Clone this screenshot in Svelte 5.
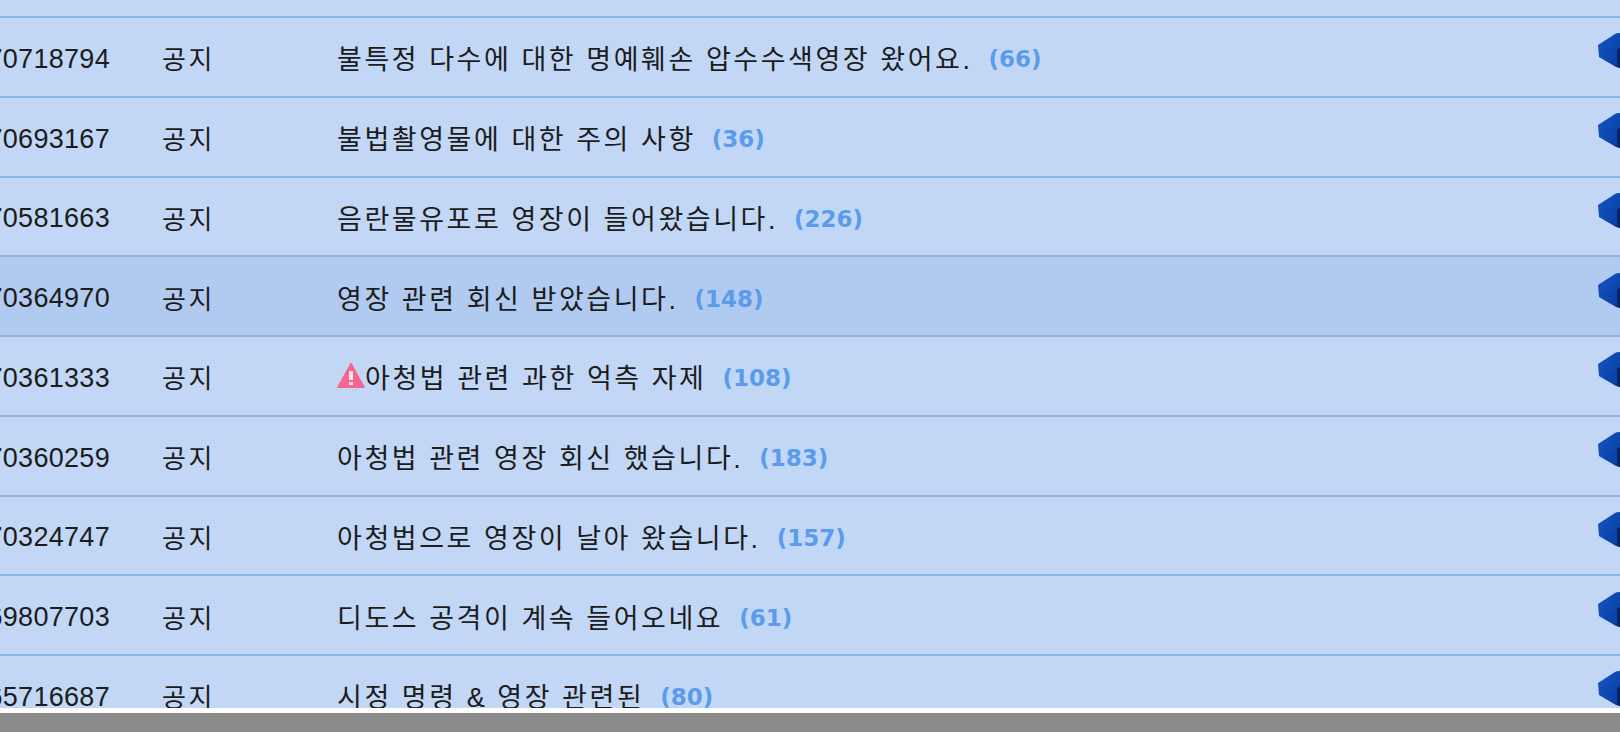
<script>
	const rows = [
		{ id: '70718794', title: '불특정 다수에 대한 명예훼손 압수수색영장 왔어요.', count: 66 },
		{ id: '70693167', title: '불법촬영물에 대한 주의 사항', count: 36 },
		{ id: '70581663', title: '음란물유포로 영장이 들어왔습니다.', count: 226 },
		{ id: '70364970', title: '영장 관련 회신 받았습니다.', count: 148, hover: true },
		{ id: '70361333', title: '아청법 관련 과한 억측 자제', count: 108, warn: true },
		{ id: '70360259', title: '아청법 관련 영장 회신 했습니다.', count: 183 },
		{ id: '70324747', title: '아청법으로 영장이 날아 왔습니다.', count: 157 },
		{ id: '69807703', title: '디도스 공격이 계속 들어오네요', count: 61 },
		{ id: '65716687', title: '시정 명령 & 영장 관련된', count: 80 }
	];
</script>

<svg class="defs" width="0" height="0">
	<defs>
		<linearGradient id="side" x1="0" y1="0" x2="1" y2="1">
			<stop offset="0" stop-color="#1257c8" />
			<stop offset="1" stop-color="#0a3a9c" />
		</linearGradient>
	</defs>
</svg>

<div class="page">
	<div class="list">
		<div class="row top"></div>
		{#each rows as row}
			<div class="row" class:hover={row.hover}>
				<div class="num">{row.id}</div>
				<div class="kind">공지</div>
				<div class="title">
					{#if row.warn}
						<svg class="warn" viewBox="0 0 28 26" width="28" height="26">
							<path d="M14 1 L27.5 25.5 H0.5 Z" fill="#f4658f" stroke="#f4658f" stroke-linejoin="round" />
							<rect x="12" y="9" width="4" height="9" fill="#fbdde6" />
							<rect x="12" y="20" width="4" height="3" fill="#fbdde6" />
						</svg>
					{/if}
					<span class="text">{row.title}</span>
					<span class="count">({row.count})</span>
				</div>
				<svg class="box" viewBox="0 0 22 35" width="22" height="35">
					<path d="M0 12 L17 1 Q18 0 22 0 V35 L18 34 L1 24 Z" fill="url(#side)" />
					<path d="M19 17 L22 15 V35 L19 34 Z" fill="#0a2566" />
				</svg>
			</div>
		{/each}
	</div>
	<div class="gap"></div>
	<div class="bar"></div>
</div>

<style>
	:global(body) {
		margin: 0;
		overflow: hidden;
	}

	.defs {
		position: absolute;
	}

	.page {
		height: 732px;
		display: grid;
		grid-template-rows: 708px 5px 19px;
		background: #fff;
	}

	.list {
		overflow: hidden;
		background: #c2d7f5;
	}

	.row {
		height: 77.75px;
		border-bottom: 2px solid #8eb4e8;
		display: grid;
		grid-template-columns: 162px 175px 1fr 22px;
		align-items: center;
		background: #c2d7f5;
		color: #1c1c1c;
		font-family: 'Liberation Sans', 'Noto Sans CJK KR', sans-serif;
		font-size: 27px;
	}

	.row.top {
		height: 16px;
	}

	.row.hover {
		background: #b1caf0;
	}

	.num {
		display: flex;
		justify-content: flex-end;
		padding: 5px 52px 0 0;
		letter-spacing: 0.3px;
		white-space: nowrap;
	}

	.kind {
		padding-top: 2px;
		font-size: 26px;
		letter-spacing: 2.5px;
	}

	.title {
		display: flex;
		align-items: center;
		padding-top: 2px;
		white-space: pre;
	}

	.text {
		letter-spacing: 2.55px;
	}

	.warn {
		flex: none;
		margin-bottom: 3px;
	}

	.count {
		margin-left: 16px;
		padding-top: 3px;
		font-family: 'DejaVu Sans', sans-serif;
		font-weight: bold;
		font-size: 23px;
		color: #5a9bec;
	}

	.box {
		margin-bottom: 12px;
	}

	.gap {
		background: #fff;
	}

	.bar {
		background: #8a8a8a;
	}
</style>
